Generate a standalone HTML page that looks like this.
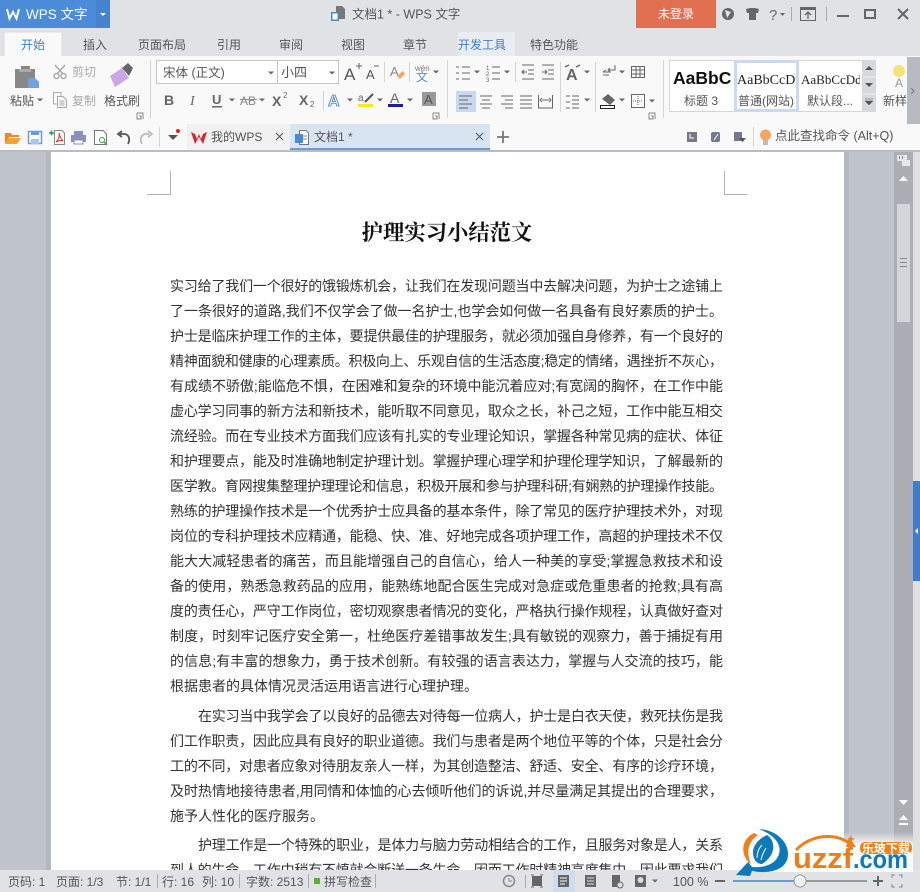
<!DOCTYPE html>
<html lang="zh-CN"><head><meta charset="utf-8"><title>WPS 文字</title>
<style>
html,body{margin:0;padding:0;width:920px;height:892px;overflow:hidden;background:#e1e2e5}
svg{display:block;position:absolute;left:0;top:0}
text{font-family:"Liberation Sans","Noto Sans CJK SC",sans-serif;font-size:12px;fill:#555}
.b text{font-family:"Liberation Sans","WenQuanYi Zen Hei","Noto Sans CJK SC",sans-serif;font-size:14px;fill:#333}
</style></head><body>
<svg width="920" height="892" viewBox="0 0 920 892" xmlns="http://www.w3.org/2000/svg">
<defs>
<linearGradient id="fade" x1="0" y1="0" x2="0" y2="1"><stop offset="0" stop-color="#fff" stop-opacity="0"/><stop offset=".35" stop-color="#fff" stop-opacity=".95"/></linearGradient>
<g id="c"><path d="M-3 -1.5H3L0 1.5Z" fill="#666"/></g>
<g id="lau"><path d="M-3 -3H3V3M-3 -3V3H1V0H-1" fill="none" stroke="#888"/></g>
</defs>
<!-- title bar -->
<rect width="920" height="56" fill="#e1e2e5"/>
<rect width="110" height="28" fill="#4b8bd8"/>
<rect x="96" width="14" height="28" fill="#4583cf"/>
<path d="M7 9L9.500 18.500L13 12L16.500 18.500L19 9" fill="none" stroke="#fff" stroke-width="2"/>
<text x="26" y="19" style="font-size:13.500px;fill:#fff">WPS 文字</text>
<path d="M100 13H106L103 16Z" fill="#fff"/>
<path d="M336 6H342L345 9V19H336Z" fill="#777"/><rect x="331" y="12" width="8" height="9" fill="#4a8ad4"/><rect x="332.500" y="13.500" width="5" height="6" fill="#fff"/>
<text x="352" y="18.500" style="font-size:12.500px;fill:#555">文档1 * - WPS 文字</text>
<rect x="636" width="80" height="28" fill="#e0704f"/>
<text x="676" y="18" text-anchor="middle" style="fill:#fff;font-size:12px">未登录</text>
<circle cx="728" cy="14" r="6" fill="#666"/><path d="M725 10L731 12L727 18Z" fill="#e1e2e5"/>
<path d="M746 9L750 8H755L759 9L758 13H756V20H749V13H747Z" fill="#666"/>
<text x="769" y="20" style="font-size:15px;fill:#666">?</text><path d="M780 13H785L782.500 16Z" fill="#666"/>
<rect x="791" y="7" width="1" height="14" fill="#aaa"/>
<rect x="800.500" y="7.500" width="15" height="13" fill="none" stroke="#666"/><rect x="800" y="7" width="16" height="3" fill="#666"/><path d="M808 19V12M805 15L808 12L811 15" fill="none" stroke="#666" stroke-width="1.300"/>
<rect x="826" y="7" width="1" height="14" fill="#aaa"/>
<rect x="837" y="15" width="12" height="2" fill="#666"/>
<rect x="865" y="10" width="10" height="8" fill="none" stroke="#666" stroke-width="2"/>
<path d="M898 9L908 19M908 9L898 19" stroke="#666" stroke-width="2"/>
<!-- tabs -->
<path d="M4 56V32H62V56" fill="#f9f9fa" stroke="#dcdcdf"/>
<rect x="458" y="32" width="57" height="24" fill="#e9ecf1"/>
<text x="33" y="49" text-anchor="middle" style="fill:#3f7fc4">开始</text>
<text x="95" y="49" text-anchor="middle">插入</text>
<text x="162" y="49" text-anchor="middle">页面布局</text>
<text x="229" y="49" text-anchor="middle">引用</text>
<text x="291" y="49" text-anchor="middle">审阅</text>
<text x="353" y="49" text-anchor="middle">视图</text>
<text x="415" y="49" text-anchor="middle">章节</text>
<text x="482" y="49" text-anchor="middle" style="fill:#3f7fc4">开发工具</text>
<text x="554" y="49" text-anchor="middle">特色功能</text>
<!-- ribbon -->
<rect y="56" width="920" height="94" fill="#f9f9fa"/>
<rect y="150" width="920" height="2" fill="#b9bcc5"/>
<!-- clipboard -->
<path d="M15 69H21V66H30V69H35V80H28V88H15Z" fill="#888"/><rect x="19" y="69" width="12" height="3" fill="#aaa"/><path d="M28 78H35L39 82V88H28Z" fill="#6ea3de"/>
<text x="10" y="105">粘贴</text><use href="#c" x="40" y="100"/>
<g fill="none" stroke="#aaa" stroke-width="1.500"><path d="M55 65L63 74M65 65L57 74"/><circle cx="56.500" cy="76" r="2.500"/><circle cx="63.500" cy="76" r="2.500"/></g>
<text x="72" y="76" style="fill:#aaa">剪切</text>
<g fill="none" stroke="#aaa"><path d="M53.500 92.500H61V104H53.500Z"/><path d="M57.500 96.500H63L66.500 100V107.500H57.500Z" fill="#f9f9fa"/><path d="M59.500 101H64.500M59.500 103H64.500M59.500 105H64.500"/></g>
<text x="72" y="105" style="fill:#aaa">复制</text>
<path d="M110 76L122 68L129 78L115 87Z" fill="#c9a8e8"/><path d="M122 68L128 63L133 68L129 76Z" fill="#666"/>
<text x="104" y="105">格式刷</text>
<use href="#lau" x="140" y="116"/>
<rect x="150" y="60" width="1" height="58" fill="#d5d5d8"/>
<!-- font -->
<rect x="156.500" y="60.500" width="182" height="23" fill="#fff" stroke="#c6c6c9"/><rect x="277" y="61" width="1" height="23" fill="#c6c6c9"/>
<text x="163" y="77" style="font-size:12.500px">宋体 (正文)</text><use href="#c" x="271" y="73"/>
<text x="281" y="77" style="font-size:13px">小四</text><use href="#c" x="332" y="73"/>
<text x="344" y="80" style="font-size:17px;fill:#555">A</text><path d="M356 66H362M359 63V69" stroke="#666"/>
<text x="366" y="79" style="font-size:13px;fill:#555">A</text><path d="M374 66H379" stroke="#666"/>
<rect x="384" y="62" width="1" height="20" fill="#d5d5d8"/>
<text x="390" y="76" style="font-size:13px;fill:#888">A</text><path d="M397 76L403 71L405 74L400 79Z" fill="#f0a860"/>
<rect x="409" y="62" width="1" height="20" fill="#d5d5d8"/>
<text x="415" y="71" style="font-size:8px;fill:#777">wén</text><text x="416" y="81" style="font-size:12px;fill:#5b8fce">文</text><use href="#c" x="436" y="72"/>
<rect x="447" y="60" width="1" height="58" fill="#d5d5d8"/>
<text x="164" y="105" style="font-size:14px;font-weight:bold;fill:#666">B</text>
<text x="190" y="105" style="font-family:'Liberation Serif',serif;font-size:14px;font-style:italic;fill:#666">I</text>
<text x="212" y="104" style="font-size:13px;font-weight:bold;fill:#666">U</text><rect x="212" y="106" width="10" height="1.500" fill="#666"/><use href="#c" x="232" y="100"/>
<text x="240" y="105" style="font-size:12px;fill:#888">AB</text><rect x="240" y="99" width="17" height="1" fill="#c87070"/><use href="#c" x="262" y="100"/>
<text x="272" y="106" style="font-size:14px;font-weight:bold;fill:#666">X</text><text x="283" y="98" style="font-size:8px;fill:#666">2</text>
<text x="299" y="105" style="font-size:14px;font-weight:bold;fill:#666">X</text><text x="310" y="107" style="font-size:8px;fill:#666">2</text>
<rect x="323" y="91" width="1" height="20" fill="#d5d5d8"/>
<text x="328" y="106" style="font-size:16px;font-weight:bold;fill:#eef4fb;stroke:#3f7fc4;stroke-width:.8">A</text><use href="#c" x="350" y="100"/>
<text x="358" y="101" style="font-size:10px;fill:#666">a</text><path d="M365 102L373 94" stroke="#555" stroke-width="2"/><rect x="358" y="104" width="15" height="3" fill="#f7ea1d"/><use href="#c" x="380" y="100"/>
<text x="390" y="103" style="font-size:14px;fill:#666">A</text><rect x="388" y="104" width="15" height="3" fill="#1a1ab0"/><use href="#c" x="410" y="100"/>
<rect x="422" y="92" width="14" height="14" fill="#999"/><text x="424" y="104" style="font-size:13px;fill:#555">A</text>
<use href="#lau" x="436" y="116"/>
<!-- para -->
<g stroke="#666" fill="none">
<path d="M462 67H470M462 73H470M462 79H470M456 67H459M456 73H459M456 79H459"/>
<path d="M492 67H500M492 73H500M492 79H500"/>
<path d="M522 65H534M522 79H534M528 70H534M528 74H534M522 72H527M524 70L522 72L524 74"/>
<path d="M542 65H554M542 79H554M548 70H554M548 74H554M542 72H547M545 70L547 72L545 74"/>
<path d="M603 72H611M615 65V70H609M606 70L603 72M610 68L608 70L610 72M603 75H609"/>
<path d="M631.500 66.500H644.500V77.500H631.500ZM636 66.500V77.500M640 66.500V77.500M631.500 70H644.500M631.500 74H644.500"/>
</g>
<text x="486" y="70" style="font-size:6px;fill:#666">1</text><text x="486" y="76" style="font-size:6px;fill:#666">2</text><text x="486" y="82" style="font-size:6px;fill:#666">3</text>
<use href="#c" x="477" y="72"/><use href="#c" x="507" y="72"/>
<rect x="515" y="62" width="1" height="20" fill="#d5d5d8"/><rect x="560" y="62" width="1" height="50" fill="#d5d5d8"/><rect x="595" y="62" width="1" height="50" fill="#d5d5d8"/>
<text x="566" y="80" style="font-size:16px;font-weight:bold;fill:#666">A</text><path d="M565 67L569 65M576 67L580 65" stroke="#666" stroke-width="1.500"/><use href="#c" x="587" y="72"/>
<use href="#c" x="622" y="72"/>
<rect x="456" y="91" width="20" height="21" fill="#c7d8ef"/>
<g stroke="#666" fill="none">
<path d="M459 96H472M459 100H468M459 104H472M459 108H468"/>
<path d="M480 96H492M482 100H490M480 104H492M482 108H490"/>
<path d="M501 96H513M505 100H513M501 104H513M505 108H513"/>
<path d="M520 96H532M520 100H532M520 104H532M520 108H532"/>
<path d="M538.500 95V108M552.500 95V108M538 108H553M542 100H549M542 98L540 100L542 102M549 98L551 100L549 102"/>
<path d="M572 96H579M572 100H579M572 104H579M572 108H579M566 96H570M566 108H570M566 102H570"/>
<path d="M631.500 94.500H644.500V107.500H631.500Z"/><path d="M638 96V106M633 101H643" stroke-dasharray="1 1"/>
</g>
<use href="#c" x="587" y="100"/>
<path d="M602 99L608 94L615 100L610 105Z" fill="#666"/><rect x="600.500" y="105.500" width="14" height="3" fill="#fff" stroke="#222"/><use href="#c" x="622" y="100"/><use href="#c" x="652" y="101"/>
<use href="#lau" x="652" y="116"/>
<rect x="663" y="60" width="1" height="58" fill="#d5d5d8"/>
<!-- styles -->
<rect x="669.500" y="60.500" width="206" height="51" fill="#fff" stroke="#d6d6d9"/>
<rect x="735.500" y="61.500" width="62" height="49" fill="#fff" stroke="#cbdaf0" stroke-width="3"/>
<text x="673" y="84" style="font-size:17.500px;font-weight:bold;fill:#111">AaBbC</text>
<svg x="737" y="65" width="58" height="28"><text x="0" y="19" style="font-family:'Liberation Serif',serif;font-size:14px;fill:#222">AaBbCcDd</text></svg>
<svg x="801" y="65" width="59" height="28"><text x="0" y="19" style="font-family:'Liberation Serif',serif;font-size:13px;fill:#222">AaBbCcDdEe</text></svg>
<text x="684" y="105">标题 3</text>
<text x="738" y="105" style="font-size:12px">普通(网站)</text>
<text x="807" y="105">默认段...</text>
<rect x="862" y="60" width="14" height="52" fill="#d7d8db"/>
<path d="M862 77H876M862 94H876" stroke="#f0f0f0"/>
<path d="M865 70H873L869 66Z" fill="#555"/><path d="M865 83H873L869 87Z" fill="#555"/><path d="M865 101H873L869 105ZM865 99H873" fill="#555" stroke="#555" stroke-width=".5"/>
<circle cx="899" cy="71" r="6" fill="#f7e27a"/><text x="895" y="87" style="font-size:12px;fill:#999">A</text>
<text x="883" y="105">新样</text>
<rect x="907" y="57" width="13" height="67" fill="#b8bac2"/>
<path d="M911 88L914 91L911 94" fill="none" stroke="#777"/>
<!-- quick bar -->
<rect x="187" y="124" width="103" height="26" fill="#f1f1f2"/>
<rect x="290" y="124" width="200" height="24" fill="#d9e4f2"/><rect x="290" y="148" width="200" height="2" fill="#6d9bd6"/>
<path d="M5 133H11L12 135H19V137H9L6 143H5Z" fill="#e58a28"/><path d="M8 138H21L17 144H5Z" fill="#f3a33e"/>
<rect x="28.500" y="131.500" width="13" height="12" fill="#fff" stroke="#6a9bdc" stroke-width="1.500"/><rect x="31" y="131" width="8" height="4" fill="#6a9bdc"/><rect x="31" y="139" width="8" height="5" fill="#a9c6ec"/>
<path d="M54.500 130.500H62L64.500 133V144.500H54.500Z" fill="#fff" stroke="#888"/><path d="M49 133H54M51.500 130.500V135.500" stroke="#2f9e47" stroke-width="1.500"/><path d="M56 142C59 139 60 136 59 133C60 137 61 139 63 141C61 140 58 141 56 142Z" fill="none" stroke="#d33"/>
<rect x="71" y="135" width="15" height="7" fill="#8b8fc0"/><rect x="74" y="131" width="9" height="4" fill="#8b8fc0"/><rect x="74" y="140" width="9" height="4" fill="#fff" stroke="#8b8fc0"/>
<path d="M94.500 130.500H103L106.500 134V144.500H94.500Z" fill="#fff" stroke="#777"/><circle cx="102" cy="140" r="2.500" fill="none" stroke="#3c9d4e"/><path d="M104 142L107 145" stroke="#3c9d4e" stroke-width="1.500"/>
<path d="M128 144C131 138 128 133 122 134H120M122 131L118 134L122 137" fill="none" stroke="#555" stroke-width="1.800"/>
<path d="M142 144C139 138 142 133 148 134H149M148 131L152 134L148 137" fill="none" stroke="#bbb" stroke-width="1.800"/>
<rect x="159" y="127" width="1" height="20" fill="#d5d5d8"/>
<path d="M168 135H178L173 140Z" fill="#555"/><circle cx="178" cy="131" r="2" fill="#e0202a"/>
<path d="M191 132L195 144L199 137L203 144L207 132L203 134L201 139L199 134L197 139L195 134Z" fill="#d8262e"/>
<text x="211" y="141">我的WPS</text>
<path d="M276 133L283 140M283 133L276 140" stroke="#555"/>
<path d="M299.500 130.500H306L308.500 133V144.500H299.500Z" fill="#fff" stroke="#777"/><rect x="295" y="134" width="8" height="9" fill="#4a8ad4"/><path d="M303 136H307M303 139H307" stroke="#888"/>
<text x="314" y="141">文档1 *</text>
<path d="M476 133L483 140M476 140L483 133" stroke="#555"/>
<path d="M497 137H509M503 131V143" stroke="#777" stroke-width="1.800"/>
<rect x="687" y="132" width="10" height="10" fill="#77798a"/><path d="M690 134V138H694" stroke="#fff" fill="none"/>
<rect x="711" y="132" width="9" height="10" rx="2" fill="#77798a"/><path d="M714 140L718 134" stroke="#fff"/>
<rect x="734" y="132" width="8" height="9" fill="#77798a"/><path d="M739 138H746L742.500 142Z" fill="#555"/>
<rect x="753" y="127" width="1" height="20" fill="#d5d5d8"/>
<circle cx="765.500" cy="135" r="5.500" fill="#f3a65d"/><rect x="763" y="140" width="5" height="5" fill="#bbb"/>
<text x="775" y="140" style="font-size:12.500px">点此查找命令 (Alt+Q)</text>
<!-- doc area -->
<rect y="152" width="920" height="718" fill="#bfc3cc"/>
<rect x="46" y="152" width="5" height="718" fill="#b3b7c1"/>
<rect x="844" y="152" width="5" height="718" fill="#b5b9c3"/>
<rect x="51" y="152" width="793" height="718" fill="#fff"/>
<rect x="894" y="152" width="19" height="718" fill="#acaeb6"/>
<rect x="913" y="152" width="7" height="718" fill="#e0e0e3"/>
<rect x="913" y="481" width="7" height="100" fill="#3f7ccc"/>
<path d="M915 531L918 528V534Z" fill="#fff"/>
<rect x="897" y="204" width="13" height="118" fill="#d3d5da"/>
<path d="M900 258.500H907M900 262.500H907M900 266.500H907" stroke="#888"/>
<path d="M897 155H907V160H910V166H902V161H897Z" fill="#e8e8ec"/><path d="M899.500 156V159M902.500 156V159" stroke="#888"/>
<path d="M899 181H908L903.500 176Z" fill="#fff"/>
<path d="M899 800H908L903.500 805Z" fill="#fff"/>
<path d="M899 820H908L903.500 815ZM899 825H908V823H899Z" fill="#fff"/>
<!-- crop marks -->
<path d="M147 194.500H170.500V171M747.500 194.500H724.500V171" fill="none" stroke="#b5b5b5"/>
<!-- title -->
<text x="447" y="240" text-anchor="middle" style="font-family:'Liberation Serif','Noto Serif CJK SC',serif;font-size:21.330px;font-weight:bold;fill:#111">护理实习小结范文</text>
<!-- body -->
<g class="b">
<text x="170" y="291" textLength="553">实习给了我们一个很好的饿锻炼机会，让我们在发现问题当中去解决问题，为护士之途铺上</text>
<text x="170" y="316" textLength="553">了一条很好的道路,我们不仅学会了做一名护士,也学会如何做一名具备有良好素质的护士。</text>
<text x="170" y="341" textLength="553">护士是临床护理工作的主体，要提供最佳的护理服务，就必须加强自身修养，有一个良好的</text>
<text x="170" y="366" textLength="553">精神面貌和健康的心理素质。积极向上、乐观自信的生活态度;稳定的情绪，遇挫折不灰心，</text>
<text x="170" y="391" textLength="553">有成绩不骄傲;能临危不惧，在困难和复杂的环境中能沉着应对;有宽阔的胸怀，在工作中能</text>
<text x="170" y="416" textLength="553">虚心学习同事的新方法和新技术，能听取不同意见，取众之长，补己之短，工作中能互相交</text>
<text x="170" y="441" textLength="553">流经验。而在专业技术方面我们应该有扎实的专业理论知识，掌握各种常见病的症状、体征</text>
<text x="170" y="466" textLength="553">和护理要点，能及时准确地制定护理计划。掌握护理心理学和护理伦理学知识，了解最新的</text>
<text x="170" y="491" textLength="553">医学教。育网搜集整理护理理论和信息，积极开展和参与护理科研;有娴熟的护理操作技能。</text>
<text x="170" y="516" textLength="553">熟练的护理操作技术是一个优秀护士应具备的基本条件，除了常见的医疗护理技术外，对现</text>
<text x="170" y="541" textLength="553">岗位的专科护理技术应精通，能稳、快、准、好地完成各项护理工作，高超的护理技术不仅</text>
<text x="170" y="566" textLength="553">能大大减轻患者的痛苦，而且能增强自己的自信心，给人一种美的享受;掌握急救技术和设</text>
<text x="170" y="591" textLength="553">备的使用，熟悉急救药品的应用，能熟练地配合医生完成对急症或危重患者的抢救;具有高</text>
<text x="170" y="616" textLength="553">度的责任心，严守工作岗位，密切观察患者情况的变化，严格执行操作规程，认真做好查对</text>
<text x="170" y="641" textLength="553">制度，时刻牢记医疗安全第一，杜绝医疗差错事故发生;具有敏锐的观察力，善于捕捉有用</text>
<text x="170" y="666" textLength="553">的信息;有丰富的想象力，勇于技术创新。有较强的语言表达力，掌握与人交流的技巧，能</text>
<text x="170" y="691">根据患者的具体情况灵活运用语言进行心理护理。</text>
<text x="198" y="721" textLength="525">在实习当中我学会了以良好的品德去对待每一位病人，护士是白衣天使，救死扶伤是我</text>
<text x="170" y="746" textLength="553">们工作职责，因此应具有良好的职业道德。我们与患者是两个地位平等的个体，只是社会分</text>
<text x="170" y="771" textLength="553">工的不同，对患者应象对待朋友亲人一样，为其创造整洁、舒适、安全、有序的诊疗环境，</text>
<text x="170" y="796" textLength="553">及时热情地接待患者,用同情和体恤的心去倾听他们的诉说,并尽量满足其提出的合理要求，</text>
<text x="170" y="821">施予人性化的医疗服务。</text>
<text x="198" y="850" textLength="525">护理工作是一个特殊的职业，是体力与脑力劳动相结合的工作，且服务对象是人，关系</text>
<text x="170" y="875" textLength="553">到人的生命。工作中稍有不慎就会断送一条生命。因而工作时精神高度集中，因此要求我们</text>
</g>
<!-- status bar -->
<rect y="870" width="920" height="22" fill="#e1e2e5"/>
<text x="8" y="886">页码: 1</text><text x="56" y="886">页面: 1/3</text><text x="116" y="886">节: 1/1</text>
<rect x="157" y="874" width="1" height="14" fill="#aaa"/>
<text x="162" y="886">行: 16</text><text x="202" y="886">列: 10</text>
<rect x="239" y="874" width="1" height="14" fill="#aaa"/>
<text x="246" y="886">字数: 2513</text>
<rect x="308" y="874" width="1" height="14" fill="#aaa"/>
<rect x="314" y="878" width="6" height="6" fill="#5cb030"/>
<text x="324" y="886">拼写检查</text>
<rect x="375" y="874" width="1" height="14" fill="#aaa"/>
<circle cx="509" cy="881" r="5.500" fill="none" stroke="#888" stroke-width="1.500"/><path d="M509 878V881H512" fill="none" stroke="#888"/>
<rect x="525" y="875" width="1" height="13" fill="#aaa"/>
<rect x="532" y="876" width="10" height="10" fill="#666"/><path d="M531 875H534M540 875H543M531 887H534M540 887H543" stroke="#666"/>
<rect x="553" y="870" width="22" height="22" fill="#cfdcef"/>
<rect x="558" y="875" width="11" height="12" fill="#666"/><path d="M560 878H567M560 881H567M560 884H565" stroke="#fff"/>
<rect x="585" y="875" width="11" height="12" fill="#666"/><path d="M587 878H594M587 881H594M587 884H594" stroke="#ddd"/>
<path d="M612 875H620V887H612Z" fill="#666"/><circle cx="620" cy="885" r="3" fill="#ddd" stroke="#666"/>
<rect x="635" y="875" width="11" height="12" fill="#666"/><circle cx="640.500" cy="880" r="3" fill="#ddd"/><use href="#c" x="655" y="881"/>
<text x="673" y="886" style="font-size:12.500px">100 %</text>
<rect x="715" y="880" width="10" height="2" fill="#666"/>
<rect x="733" y="880" width="67" height="2" fill="#6d9bd6"/><rect x="800" y="880" width="67" height="2" fill="#999"/>
<circle cx="800" cy="881" r="6" fill="#f2f2f2" stroke="#999"/>
<path d="M873 881H883M878 876V886" stroke="#666" stroke-width="2"/>
<path d="M892 878V875H895M899 875H902V878M902 884V887H899M895 887H892V884" fill="none" stroke="#888"/>
<!-- watermark -->
<rect x="745" y="832" width="168" height="40" fill="url(#fade)"/>
<path d="M759 829C778 830 792 845 787 860C783 871 767 874 752 871L750 876L736 875L748 862L752 867C765 868 776 864 779 854C782 844 774 835 759 829Z" fill="#0e78bd"/>
<path d="M754 833C744 838 741 848 745 857C747 861 749 863 751 864C746 852 748 842 758 835Z" fill="#ef8019"/>
<path d="M753 852C753 845 760 838 767 835C777 842 775 856 762 864C757 864 753 860 753 852Z" fill="#0e78bd"/>
<path d="M757 858C757 852 759 848 762 845M761 860C762 855 764 851 766 848" fill="none" stroke="#fff"/>
<path d="M796 850C812 834 836 832 852 845" fill="none" stroke="#ef8019" stroke-width="3"/>
<path d="M849 837L856 847L846 847Z" fill="#ef8019"/>
<rect x="860" y="842" width="52" height="12" rx="5" fill="#ef8019"/>
<text x="886" y="852.500" text-anchor="middle" style="font-size:12px;font-weight:bold;fill:#fff">乐玻下载</text>
<text x="793" y="868" textLength="60" lengthAdjust="spacingAndGlyphs" style="font-size:29px;font-weight:bold;fill:#ef7d17">uzzf</text>
<text x="853" y="868" textLength="55" lengthAdjust="spacingAndGlyphs" style="font-size:26px;font-weight:bold;fill:#0e78bd">.com</text>
<path d="M851 835L852 838L855 839L852 840L851 843L850 840L847 839L850 838Z" fill="#ef8019"/>
</svg>
</body></html>
